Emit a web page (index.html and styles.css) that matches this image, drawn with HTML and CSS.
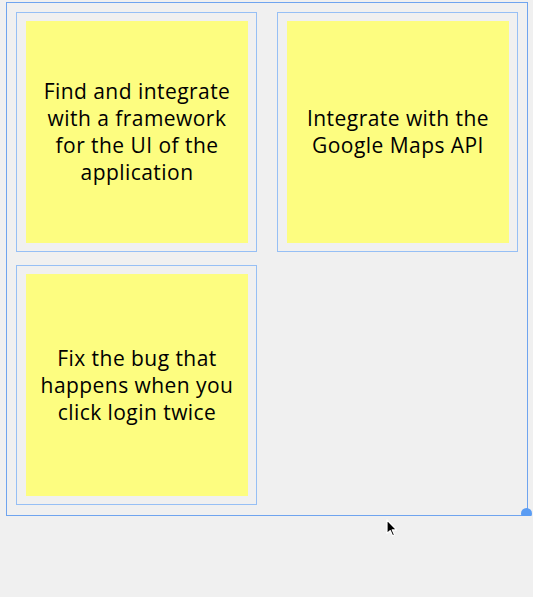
FILE: index.html
```html
<!DOCTYPE html>
<html>
<head>
  <title>Board</title>
  <link rel="stylesheet" href="styles.css">
</head>
<body>
  <div class="board">
    <div class="note-grid">
      <div class="note-slot">
        <div class="note">Find and integrate with a framework for the UI of the application</div>
      </div>
      <div class="note-slot">
        <div class="note">Integrate with the Google Maps API</div>
      </div>
      <div class="note-slot">
        <div class="note">Fix the bug that happens when you click login twice</div>
      </div>
    </div>
    <div class="resize-handle"></div>
  </div>

  <svg class="cursor" width="12" height="18" viewBox="0 0 12 18">
    <path d="M1 1 L1 14.5 L4.2 11.6 L6.6 16.8 L8.6 15.9 L6.3 10.9 L10.6 10.9 Z" fill="#000" stroke="#fff" stroke-width="1.2" stroke-linejoin="round"/>
  </svg>
</body>
</html>
```

FILE: styles.css
```css
body {
  margin: 0;
  background-color: #f0f0f0;
  font-family: "Open Sans", "Lato", sans-serif;
}

.board {
  position: relative;
  box-sizing: border-box;
  width: 522px;
  margin: 2px 0 0 6px;
  border: 1px solid #6fa4ef;
  padding: 9px 9px 10px 9px;
}

.note-grid {
  display: grid;
  grid-template-columns: 241px 241px;
  column-gap: 20px;
  row-gap: 13px;
}

.note-slot {
  box-sizing: border-box;
  height: 240px;
  border: 1px solid #96bff5;
  padding: 8px 8px 8px 9px;
}

.note {
  height: 100%;
  background-color: #fdfd80;
  display: flex;
  align-items: center;
  justify-content: center;
  text-align: center;
  padding: 0 10px;
  font-size: 21px;
  letter-spacing: 0.45px;
  line-height: 27px;
  color: #000;
}

.resize-handle {
  position: absolute;
  right: -5px;
  bottom: -4px;
  width: 11px;
  height: 11px;
  border-radius: 50%;
  background-color: #5a9cf3;
}

.cursor {
  position: absolute;
  left: 386px;
  top: 519px;
}
```
